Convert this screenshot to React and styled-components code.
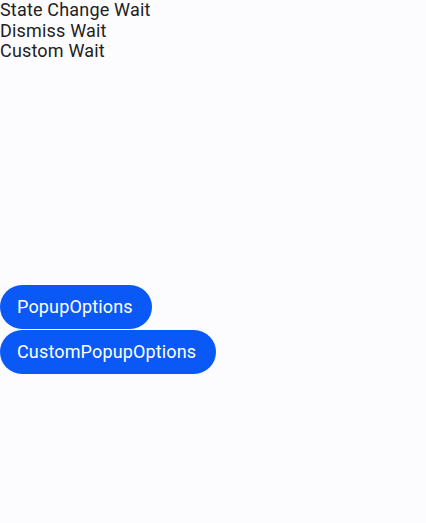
import React from 'react'
import styled, { createGlobalStyle } from 'styled-components'

const GlobalStyle = createGlobalStyle`
  html, body {
    margin: 0;
    padding: 0;
    background: #fcfcfe;
  }
  body {
    font-family: Roboto, "Noto Sans", sans-serif;
  }
`

const Page = styled.div`
  display: flex;
  flex-direction: column;
  align-items: flex-start;
  width: 426px;
  height: 523px;
  background: #fcfcfe;
`

const Status = styled.div`
  font-size: 18px;
  line-height: 20.5px;
  letter-spacing: 0.18px;
  color: #222222;
`

const ButtonColumn = styled.div`
  display: flex;
  flex-direction: column;
  align-items: flex-start;
  gap: 1px;
  margin-top: 223px;
`

const PillButton = styled.button`
  height: 44px;
  padding: 0 19.5px 0 17px;
  border: none;
  border-radius: 22px;
  background: #0a59f7;
  color: #ffffff;
  font-family: Roboto, "Noto Sans", sans-serif;
  font-size: 18px;
  letter-spacing: 0.15px;
`

export default function App() {
  return (
    <Page>
      <GlobalStyle />
      <Status>State Change Wait</Status>
      <Status>Dismiss Wait</Status>
      <Status>Custom Wait</Status>
      <ButtonColumn>
        <PillButton>PopupOptions</PillButton>
        <PillButton>CustomPopupOptions</PillButton>
      </ButtonColumn>
    </Page>
  )
}
